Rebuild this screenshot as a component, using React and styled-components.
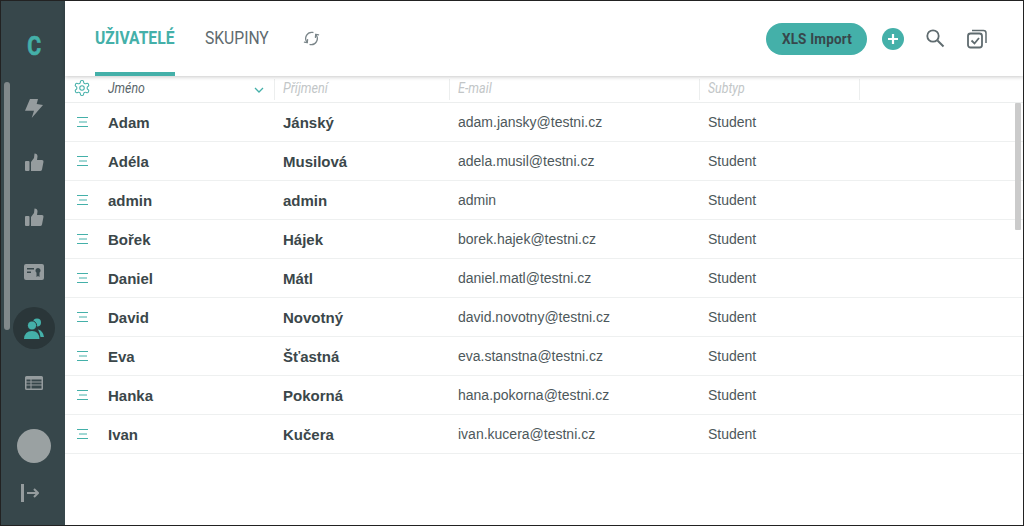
import React from 'react'
import styled, { createGlobalStyle } from 'styled-components'

const GlobalStyle = createGlobalStyle`
  html, body { margin: 0; padding: 0; background: #fff; }
  body { font-family: "Liberation Sans", Arial, sans-serif; }
`

const teal = '#44b0a9'
const slate = '#37474b'
const iconGray = '#959c9e'

const users = [
  ['Adam', 'Jánský', 'adam.jansky@testni.cz'],
  ['Adéla', 'Musilová', 'adela.musil@testni.cz'],
  ['admin', 'admin', 'admin'],
  ['Bořek', 'Hájek', 'borek.hajek@testni.cz'],
  ['Daniel', 'Mátl', 'daniel.matl@testni.cz'],
  ['David', 'Novotný', 'david.novotny@testni.cz'],
  ['Eva', 'Šťastná', 'eva.stanstna@testni.cz'],
  ['Hanka', 'Pokorná', 'hana.pokorna@testni.cz'],
  ['Ivan', 'Kučera', 'ivan.kucera@testni.cz'],
]

const Frame = styled.div`
  position: relative;
  box-sizing: border-box;
  width: 1024px;
  height: 526px;
  display: flex;
  border: 1px solid #222;
  overflow: hidden;
`

const Sidebar = styled.nav`
  position: relative;
  width: 64px;
  flex: none;
  background: ${slate};
  display: flex;
  flex-direction: column;
  align-items: center;
  padding-left: 2px;
  box-sizing: border-box;
`

const SideThumb = styled.div`
  position: absolute;
  left: 3px;
  top: 81px;
  width: 6px;
  height: 248px;
  border-radius: 3px;
  background: #81898b;
`

const Logo = styled.div`
  height: 31px;
  margin-top: 30px;
  margin-bottom: 25px;
  font: 700 25px/31px Roboto, sans-serif;
  -webkit-text-stroke: .6px ${teal};
  color: ${teal};
  transform: scaleX(.85);
`

const SideIcon = styled.div`
  width: 42px;
  height: 42px;
  flex: none;
  border-radius: 50%;
  display: flex;
  align-items: center;
  justify-content: center;
  margin-bottom: ${p => p.$gap}px;
  background: ${p => (p.$active ? '#2a3639' : 'transparent')};
`

const Avatar = styled.div`
  flex: none;
  width: 34px;
  height: 34px;
  border-radius: 50%;
  background: #9aa1a2;
  margin-top: 8px;
  margin-bottom: 21px;
`

const ExitSvg = styled.svg`
  flex: none;
  margin-right: 8px;
`

const Main = styled.main`
  flex: 1;
  position: relative;
  display: flex;
  flex-direction: column;
  min-width: 0;
`

const TopBar = styled.header`
  height: 75px;
  flex: none;
  display: flex;
  align-items: stretch;
  padding-left: 30px;
  box-shadow: 0 1px 4px rgba(0, 0, 0, .22);
  position: relative;
  z-index: 1;
  background: #fff;
`

const Tab = styled.div`
  box-sizing: border-box;
  width: ${p => p.$width}px;
  margin-right: ${p => p.$gap}px;
  padding-top: 25px;
  font: ${p => (p.$active ? 700 : 400)} 18px/24px Roboto, sans-serif;
  color: ${p => (p.$active ? teal : '#5f6b6f')};
  border-bottom: 4px solid ${p => (p.$active ? teal : 'transparent')};
  white-space: nowrap;
`

const Narrow = styled.span`
  display: inline-block;
  transform: scaleX(${p => p.$x});
  transform-origin: ${p => p.$origin || 'left'} center;
`

const Refresh = styled.svg`
  margin-top: 29px;
  flex: none;
`

const Actions = styled.div`
  margin-left: auto;
  display: flex;
  align-items: center;
  padding-right: 36px;
`

const ImportButton = styled.button`
  box-sizing: border-box;
  width: 101px;
  height: 32px;
  margin-top: 1px;
  border: 0;
  border-radius: 16px;
  background: ${teal};
  color: #37474b;
  font: 700 15px/32px Roboto, sans-serif;
  padding: 0;
  letter-spacing: .2px;
  text-align: center;
`

const PlusButton = styled.div`
  width: 22px;
  height: 22px;
  margin: 1px 21px 0 15px;
  border-radius: 50%;
  background: ${teal};
  display: flex;
  align-items: center;
  justify-content: center;
`

const SearchIcon = styled.svg`
  margin-right: 22px;
  margin-top: -1px;
`

const HeadRow = styled.div`
  display: grid;
  grid-template-columns: 35px 175px 175px 250px 160px;
  height: 27px;
  border-bottom: 1px solid #eceeee;
  box-sizing: border-box;
  align-items: stretch;
`

const GearCell = styled.div`
  display: flex;
  align-items: center;
  padding: 0 0 3px 8px;
`

const HeadCell = styled.div`
  display: flex;
  align-items: center;
  justify-content: space-between;
  padding: 0 10px 4px 8px;
  margin: 3px 0 2px;
  border-right: 1px solid #eceeee;
  font: italic 400 14px/20px Roboto, sans-serif;
  color: ${p => (p.$active ? '#5a666a' : '#c2c6c7')};
  white-space: nowrap;
  overflow: hidden;
`

const Chevron = styled.svg`
  margin-top: 4px;
`

const Row = styled.div`
  display: grid;
  grid-template-columns: 35px 175px 175px 250px 160px;
  height: 39px;
  box-sizing: border-box;
  border-bottom: 1px solid #eef0f0;
  align-items: center;
`

const Burger = styled.svg`
  margin-left: 12px;
`

const Strong = styled.div`
  padding-left: 8px;
  font-size: 15px;
  font-weight: 700;
  color: #3b474a;
`

const Plain = styled.div`
  padding-left: 8px;
  font-size: 14px;
  color: #4d585b;
`

const MainThumb = styled.div`
  position: absolute;
  right: 2px;
  top: 102px;
  width: 6px;
  height: 127px;
  background: #cbcbcb;
  border-radius: 1px;
`

const BoltIcon = () => (
  <svg width="18" height="19" viewBox="0 0 18 19">
    <path fill={iconGray} d="M5 0H13L11.700 5L18 6L6.700 19L9 11.700H0Z" />
  </svg>
)

const ThumbIcon = () => (
  <svg width="19" height="18" viewBox="0 0 19 18">
    <rect fill={iconGray} x="0" y="8" width="4.500" height="10" rx="1" />
    <path fill={iconGray} d="M6 9L9 5L9.500 0.500Q12.500 0.500 12.500 3.500L12 7H17Q18.700 7 18.500 8.700L17 16.500Q16.700 18 15 18H6Z" />
  </svg>
)

const CertIcon = () => (
  <svg width="20" height="16" viewBox="0 0 20 16">
    <path fill={iconGray} fillRule="evenodd" d="M2 0h16a2 2 0 0 1 2 2v12a2 2 0 0 1-2 2H2a2 2 0 0 1-2-2V2a2 2 0 0 1 2-2zm1 4v1.500h7V4H3zm0 3.500V9h4V7.500H3zM14 4a2.600 2.600 0 0 0-1.500 4.700V13l1.500-1 1.500 1V8.700A2.600 2.600 0 0 0 14 4z" />
  </svg>
)

const UsersIcon = () => (
  <svg width="20" height="21" viewBox="0 0 20 21">
    <circle fill={teal} cx="13" cy="4.500" r="4" />
    <path fill={teal} d="M14 11.500Q19 12.500 20 19H16.500Q16 15 14 11.500Z" />
    <circle fill={teal} stroke="#2a3639" cx="8" cy="7.500" r="4.600" />
    <path fill={teal} d="M0 21Q0.500 13 8 13Q15 13 15.500 21Z" />
  </svg>
)

const TableIcon = () => (
  <svg width="18" height="14" viewBox="0 0 18 14">
    <path fill={iconGray} fillRule="evenodd" d="M1.500 0h15A1.500 1.500 0 0 1 18 1.500v11a1.500 1.500 0 0 1-1.500 1.500h-15A1.500 1.500 0 0 1 0 12.500v-11A1.500 1.500 0 0 1 1.500 0zm0 3.500v2h4v-2h-4zm5 0v2h10v-2h-10zm-5 3v2h4v-2h-4zm5 0v2h10v-2h-10zm-5 3v3h4v-3h-4zm5 0v3h10v-3h-10z" />
  </svg>
)

const App = () => {
  return (
    <Frame>
      <GlobalStyle />
      <Sidebar>
        <SideThumb />
        <Logo>C</Logo>
        <SideIcon $gap={12}><BoltIcon /></SideIcon>
        <SideIcon $gap={13}><ThumbIcon /></SideIcon>
        <SideIcon $gap={13}><ThumbIcon /></SideIcon>
        <SideIcon $gap={14}><CertIcon /></SideIcon>
        <SideIcon $gap={13} $active><UsersIcon /></SideIcon>
        <SideIcon $gap={17}><TableIcon /></SideIcon>
        <Avatar />
        <ExitSvg width="18" height="18" viewBox="0 0 18 18" fill="none" stroke={iconGray}>
          <path strokeWidth="3" d="M1.500 0v18" />
          <path strokeWidth="2" d="M6 9h11M13 5l4 4-4 4" />
        </ExitSvg>
      </Sidebar>
      <Main>
        <TopBar>
          <Tab $active $width={80} $gap={30}><Narrow $x={0.87}>UŽIVATELÉ</Narrow></Tab>
          <Tab $width={65} $gap={33}><Narrow $x={0.87}>SKUPINY</Narrow></Tab>
          <Refresh width="17" height="17" viewBox="0 0 24 24" fill="none" stroke="#7a8589" strokeWidth="1.800" strokeLinecap="round" strokeLinejoin="round">
            <path d="M14 3.500A8.500 8.500 0 0 0 6 17.500" />
            <path d="M2 17L6 18L6.500 13.500" />
            <path d="M10 20.500A8.500 8.500 0 0 0 18 6.500" />
            <path d="M22 7L18 6L17.500 10.500" />
          </Refresh>
          <Actions>
            <ImportButton><Narrow $x={0.9} $origin="center">XLS Import</Narrow></ImportButton>
            <PlusButton>
              <svg width="12" height="12" viewBox="0 0 12 12" stroke="#fff" strokeWidth="2.200"><path d="M6 1v10M1 6h10" /></svg>
            </PlusButton>
            <SearchIcon width="20" height="20" viewBox="0 0 20 20" fill="none" stroke="#5f6b6f">
              <circle cx="8" cy="8" r="5.700" strokeWidth="1.800" />
              <path d="M12.500 12.500l6 6" strokeWidth="2" />
            </SearchIcon>
            <svg width="20" height="20" viewBox="0 0 20 20" fill="none" stroke="#5f6b6f" strokeWidth="1.500">
              <rect x="1" y="4.500" width="14" height="14" rx="2.500" strokeWidth="1.800" />
              <path d="M5 1.500h11.500a2.500 2.500 0 0 1 2.500 2.500v10" />
              <path d="M4.500 11.500l3 3 4.500-5.500" strokeWidth="1.800" />
            </svg>
          </Actions>
        </TopBar>
        <HeadRow>
          <GearCell>
            <svg width="18" height="18" viewBox="0 0 24 24" fill="none" stroke={teal} strokeWidth="1.400" strokeLinejoin="round">
              <path d="M12.220 2h-.44a2 2 0 0 0-2 2v.18a2 2 0 0 1-1 1.730l-.43.250a2 2 0 0 1-2 0l-.15-.080a2 2 0 0 0-2.730.730l-.22.380a2 2 0 0 0 .730 2.730l.150.100a2 2 0 0 1 1 1.720v.510a2 2 0 0 1-1 1.740l-.150.090a2 2 0 0 0-.730 2.730l.22.380a2 2 0 0 0 2.730.730l.150-.080a2 2 0 0 1 2 0l.43.250a2 2 0 0 1 1 1.730V20a2 2 0 0 0 2 2h.44a2 2 0 0 0 2-2v-.18a2 2 0 0 1 1-1.730l.43-.250a2 2 0 0 1 2 0l.15.080a2 2 0 0 0 2.730-.730l.22-.390a2 2 0 0 0-.730-2.730l-.150-.080a2 2 0 0 1-1-1.740v-.500a2 2 0 0 1 1-1.740l.150-.090a2 2 0 0 0 .730-2.730l-.22-.380a2 2 0 0 0-2.730-.730l-.150.080a2 2 0 0 1-2 0l-.43-.250a2 2 0 0 1-1-1.730V4a2 2 0 0 0-2-2z" />
              <circle cx="12" cy="12" r="3" />
            </svg>
          </GearCell>
          <HeadCell $active>
            <Narrow $x={0.88}>Jméno</Narrow>
            <Chevron width="10" height="6" viewBox="0 0 10 6" fill="none" stroke={teal} strokeWidth="1.300"><path d="M1 1l4 4 4-4" /></Chevron>
          </HeadCell>
          <HeadCell><Narrow $x={0.9}>Příjmení</Narrow></HeadCell>
          <HeadCell><Narrow $x={0.9}>E-mail</Narrow></HeadCell>
          <HeadCell><Narrow $x={0.88}>Subtyp</Narrow></HeadCell>
        </HeadRow>
        {users.map(u => (
          <Row key={u[2]}>
            <Burger width="12" height="10" viewBox="0 0 12 10" fill="none" stroke={teal} strokeWidth="1">
              <path d="M0 .5h11M2 5h8M0 9.500h11" />
            </Burger>
            <Strong>{u[0]}</Strong>
            <Strong>{u[1]}</Strong>
            <Plain>{u[2]}</Plain>
            <Plain>Student</Plain>
          </Row>
        ))}
        <MainThumb />
      </Main>
    </Frame>
  )
}

export default App
